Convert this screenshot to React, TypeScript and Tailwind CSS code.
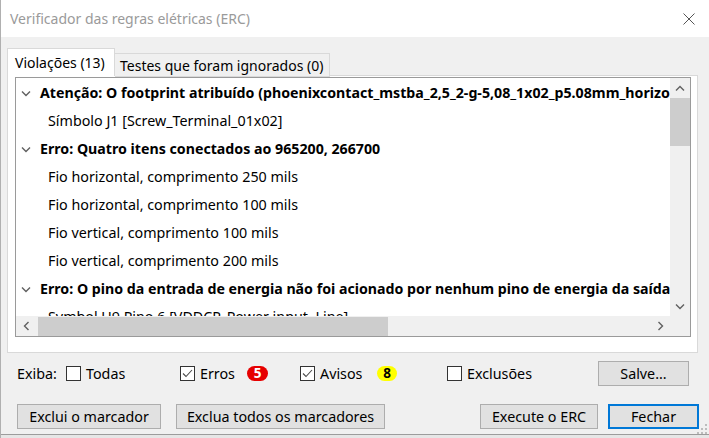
import React from 'react';

type Row = { kind: 'head' | 'item'; text: string };

const rows: Row[] = [
  { kind: 'head', text: 'Atenção: O footprint atribuído (phoenixcontact_mstba_2,5_2-g-5,08_1x02_p5.08mm_horizontal) não foi encontrado na biblioteca' },
  { kind: 'item', text: 'Símbolo J1 [Screw_Terminal_01x02]' },
  { kind: 'head', text: 'Erro: Quatro itens conectados ao 965200, 266700' },
  { kind: 'item', text: 'Fio horizontal, comprimento 250 mils' },
  { kind: 'item', text: 'Fio horizontal, comprimento 100 mils' },
  { kind: 'item', text: 'Fio vertical, comprimento 100 mils' },
  { kind: 'item', text: 'Fio vertical, comprimento 200 mils' },
  { kind: 'head', text: 'Erro: O pino da entrada de energia não foi acionado por nenhum pino de energia da saída' },
  { kind: 'item', text: 'Symbol U9 Pino 6 [VDDCP, Power input, Line]' },
];

function Chevron({ dir }: { dir: 'up' | 'down' | 'left' | 'right' }) {
  const d = {
    up: 'M1 5.5 L5 1.5 L9 5.5',
    down: 'M1 1.5 L5 5.5 L9 1.5',
    left: 'M5.5 1 L1.5 5 L5.5 9',
    right: 'M1.5 1 L5.5 5 L1.5 9',
  }[dir];
  const vertical = dir === 'up' || dir === 'down';
  return (
    <svg width={vertical ? 10 : 7} height={vertical ? 7 : 10} viewBox={vertical ? '0 0 10 7' : '0 0 7 10'}>
      <path d={d} fill="none" stroke="#606060" strokeWidth="1.4" />
    </svg>
  );
}

function Check({ checked, label }: { checked?: boolean; label: string }) {
  return (
    <div className="flex items-center gap-[5px]">
      <div className="w-[15px] h-[15px] bg-white border border-[#333333] flex items-center justify-center">
        {checked && (
          <svg width="11" height="9" viewBox="0 0 11 9">
            <path d="M1 4.5 L4 7.5 L10 1" fill="none" stroke="#4a4a4a" strokeWidth="1.1" />
          </svg>
        )}
      </div>
      <span>{label}</span>
    </div>
  );
}

function Button({ label, className = '', primary }: { label: string; className?: string; primary?: boolean }) {
  return (
    <div
      className={`h-[25px] bg-[#e1e1e1] flex items-center justify-center shrink-0 ${
        primary ? 'border-2 border-[#0078d7]' : 'border border-[#adadad]'
      } ${className}`}
    >
      {label}
    </div>
  );
}

export default function App() {
  return (
    <div className="w-[709px] h-[438px] overflow-hidden relative flex flex-col bg-[#f0f0f0] border-l border-[#b0b0b0] text-black font-['Noto_Sans',sans-serif] text-[14.3px]">
      {/* title bar */}
      <div className="h-[37px] shrink-0 bg-white flex items-center justify-between pl-[9px] pr-[14px]">
        <span className="text-[14px] text-[#9a9a9a]">Verificador das regras elétricas (ERC)</span>
        <svg width="12" height="12" viewBox="0 0 12 12">
          <path d="M0.5 0.5 L11.5 11.5 M11.5 0.5 L0.5 11.5" stroke="#555" strokeWidth="1" />
        </svg>
      </div>

      {/* tabs */}
      <div className="flex items-end ml-[6px] mt-[11px] h-[28px] relative z-10 text-[14px]">
        <div className="w-[108px] h-[28px] bg-white border border-b-0 border-[#d9d9d9] pl-[7px] flex items-center">
          Violações (13)
        </div>
        <div className="w-[215px] h-[24px] bg-[#f0f0f0] border border-l-0 border-[#d9d9d9] pl-[5px] flex items-center -mb-px">
          Testes que foram ignorados (0)
        </div>
      </div>

      {/* tab page */}
      <div className="ml-[6px] w-[691px] h-[278px] -mt-px bg-white border border-[#d9d9d9] pt-px pl-[7px] pr-[6px]">
        <div className="h-[260px] border border-[#9a9a9a] flex flex-col">
          <div className="flex flex-1 min-h-0">
            <div className="flex-1 overflow-hidden bg-white pt-px">
              {rows.map((r, i) =>
                r.kind === 'head' ? (
                  <div key={i} className="h-[28px] flex items-center whitespace-nowrap font-bold text-[14.2px]">
                    <div className="w-[24px] pl-[5px] shrink-0 flex items-center">
                      <Chevron dir="down" />
                    </div>
                    {r.text}
                  </div>
                ) : (
                  <div key={i} className="h-[28px] flex items-center whitespace-nowrap pl-[32px]">
                    {r.text}
                  </div>
                )
              )}
            </div>
            <div className="w-[20px] bg-[#f0f0f0] flex flex-col shrink-0">
              <div className="h-[20px] flex items-center justify-center">
                <Chevron dir="up" />
              </div>
              <div className="h-[48px] bg-[#cdcdcd]" />
              <div className="flex-1" />
              <div className="h-[20px] flex items-center justify-center">
                <Chevron dir="down" />
              </div>
            </div>
          </div>
          <div className="h-[20px] flex shrink-0">
            <div className="flex-1 bg-[#f0f0f0] flex items-center">
              <div className="w-[20px] flex items-center justify-center">
                <Chevron dir="left" />
              </div>
              <div className="ml-[2px] w-[350px] h-[19px] bg-[#cdcdcd]" />
              <div className="flex-1" />
              <div className="w-[20px] flex items-center justify-center">
                <Chevron dir="right" />
              </div>
            </div>
            <div className="w-[20px] bg-[#f0f0f0]" />
          </div>
        </div>
      </div>

      {/* filter row */}
      <div className="mt-[8px] h-[25px] flex items-center">
        <div className="w-[65px] pl-[16px] shrink-0">Exiba:</div>
        <div className="w-[114px] shrink-0">
          <Check label="Todas" />
        </div>
        <div className="w-[67px] shrink-0">
          <Check checked label="Erros" />
        </div>
        <div className="w-[53px] shrink-0">
          <div className="w-[21px] h-[15px] rounded-full bg-[#e60000] text-white font-bold text-[13.5px] leading-none flex items-center justify-center">
            5
          </div>
        </div>
        <div className="w-[77px] shrink-0">
          <Check checked label="Avisos" />
        </div>
        <div className="w-[70px] shrink-0">
          <div className="w-[20px] h-[15px] rounded-full bg-[#ffff00] text-black font-bold text-[13.5px] leading-none flex items-center justify-center">
            8
          </div>
        </div>
        <div className="w-[151px] shrink-0">
          <Check label="Exclusões" />
        </div>
        <Button label="Salve..." className="w-[91px]" />
      </div>

      {/* button row */}
      <div className="mt-[18px] h-[25px] flex items-center">
        <Button label="Exclui o marcador" className="ml-[16px] w-[144px]" />
        <Button label="Exclua todos os marcadores" className="ml-[15px] w-[209px]" />
        <Button label="Execute o ERC" className="ml-[95px] w-[118px]" />
        <Button label="Fechar" primary className="ml-[10px] w-[91px]" />
      </div>

      <div className="flex-1" />
      <div className="h-[4px] shrink-0 border-t border-[#9c9c9c] bg-[#e6e6e6]" />

      {/* resize grip */}
      <svg className="absolute right-[1px] bottom-[3px]" width="12" height="12" viewBox="0 0 12 12">
        {[
          [9, 1],
          [5, 5],
          [9, 5],
          [1, 9],
          [5, 9],
          [9, 9],
        ].map(([x, y], i) => (
          <rect key={i} x={x} y={y} width="2" height="2" fill="#bcbcbc" />
        ))}
      </svg>
    </div>
  );
}
